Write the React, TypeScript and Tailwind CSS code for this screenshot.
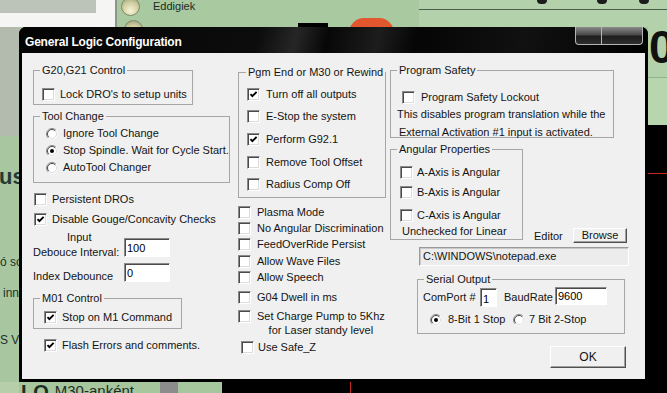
import clsx from "clsx";
import type { ReactNode } from "react";

// classic win32 sunken checkbox
const Check = ({ on }: { on?: boolean }) => (
  <span className="flex size-[13px] shrink-0 items-center justify-center border border-t-[#8a8a8a] border-l-[#8a8a8a] border-r-white border-b-white bg-white shadow-[inset_1px_1px_0_#4a4a4a,inset_-1px_-1px_0_#dcdcdc]">
    {on && (
      <svg width="9" height="9" viewBox="0 0 9 9">
        <path d="M1.5 4.2 3.4 6.2 7.6 1.9" fill="none" stroke="#000" strokeWidth="1.9" />
      </svg>
    )}
  </span>
);

const Radio = ({ on }: { on?: boolean }) => (
  <svg width="12" height="12" viewBox="0 0 12 12" className="shrink-0">
    <circle cx="6" cy="6" r="5.5" fill="#fff" />
    <path d="M9.9 2.1A5.5 5.5 0 0 0 2.1 9.9" fill="none" stroke="#8a8a8a" />
    <path d="M9.2 2.8A4.5 4.5 0 0 0 2.8 9.2" fill="none" stroke="#4a4a4a" />
    <path d="M9.2 2.8A4.5 4.5 0 0 1 2.8 9.2" fill="none" stroke="#dcdcdc" />
    {on && <circle cx="6" cy="6" r="2" fill="#000" />}
  </svg>
);

const CheckRow = ({
  on,
  label,
  className,
  gap = "ml-[5px]",
}: {
  on?: boolean;
  label: string;
  className?: string;
  gap?: string;
}) => (
  <div className={clsx("flex h-[13px] items-center", className)}>
    <Check on={on} />
    <span className={clsx("whitespace-nowrap", gap)}>{label}</span>
  </div>
);

const Group = ({
  legend,
  className,
  legendClass = "ml-[6px]",
  children,
}: {
  legend: string;
  className?: string;
  legendClass?: string;
  children: ReactNode;
}) => (
  <fieldset className={clsx("shrink-0 border border-[#a6a6a6]", className)}>
    <legend className={clsx("whitespace-nowrap px-[2px] leading-[13px]", legendClass)}>{legend}</legend>
    {children}
  </fieldset>
);

const Field = ({ value, className }: { value: string; className?: string }) => (
  <input
    readOnly
    value={value}
    className={clsx(
      "shrink-0 border border-t-[#8a8a8a] border-l-[#8a8a8a] border-r-white border-b-white bg-white px-[2px] text-[11px] leading-[13px] text-black shadow-[inset_1px_1px_0_#4a4a4a] outline-none",
      className
    )}
  />
);

const Btn = ({ className, children }: { className?: string; children: ReactNode }) => (
  <button className={clsx("flex shrink-0 items-center justify-center border border-t-white border-l-white border-r-[#505050] border-b-[#505050] bg-[#f0f0f0] leading-none shadow-[inset_-1px_-1px_0_#a0a0a0]", className)}>
    {children}
  </button>
);

const App = () => {
  return (
    <div className="relative h-[393px] w-[667px] overflow-hidden bg-[#a8c7a0] font-['Liberation_Sans',Arial,sans-serif] text-[11px] text-[#141414]">
      {/* Mach3 screen behind the dialog */}
      <div className="flex h-full flex-col">
        <div className="flex h-[27px] shrink-0">
          <div className="flex w-[96px] flex-col">
            <div className="h-[13px] bg-[#bcc3b8]" />
            <div className="flex-1 bg-[#f5f6f3]" />
          </div>
          <div className="w-[19px] bg-[#f5f6f3]" />
          <div className="w-[2px] bg-[#8e968b]" />
          <div className="flex w-[302px] items-start bg-[#a9c9a1] pl-[4px]">
            <div className="flex flex-col">
              <div className="-mt-[3px] size-[19px] rounded-full border border-[#7d8a68] bg-[radial-gradient(circle_at_50%_75%,#f7f4d6,#cfcc9f_55%,#8e9670)]" />
              <div className="ml-[3px] mt-[4px] size-[19px] rounded-full border border-[#7d8a68] bg-[radial-gradient(circle_at_50%_75%,#f7f4d6,#cfcc9f_55%,#8e9670)]" />
            </div>
            <span className="ml-[10px] text-[11px] leading-[13px] text-[#1d2b24]">Eddigiek</span>
            <div className="ml-auto mt-[23px] h-[4px] w-[30px] bg-black" />
            <div className="ml-[21px] mr-[25px] mt-[18px] h-[30px] w-[45px] rounded-full bg-[#e2572e]" />
          </div>
          <div className="flex flex-1 flex-col bg-[#b3d1aa]">
            <div className="flex h-[10px] border-b border-[#4c5e4e] pl-[118px]">
              <div className="h-[4px] w-[10px] rounded-b-sm bg-[#1c1c1c]" />
              <div className="ml-[50px] h-[4px] w-[10px] rounded-b-sm bg-[#1c1c1c]" />
              <div className="ml-[32px] h-[4px] w-[10px] rounded-b-sm bg-[#1c1c1c]" />
            </div>
          </div>
        </div>
        <div className="flex h-[355px] shrink-0">
          <div className="flex w-[19px] flex-col overflow-visible">
            <div className="h-[109px] shrink-0 bg-[#b3bbaf]" />
            <div className="flex flex-1 flex-col whitespace-nowrap text-[12px] leading-[14px] text-[#21322a]">
              <span className="-ml-[1px] mt-[30px] text-[22px] font-bold leading-[22px] text-[#263a33]">us</span>
              <span className="mt-[67px]">ó so</span>
              <span className="mt-[17px] pl-[3px]">inn</span>
              <span className="mt-[33px]">S Ve</span>
            </div>
          </div>
          <div className="flex-1" />
          <div className="flex w-[19px] flex-col">
            <div className="h-[50px] overflow-hidden bg-[#b3d1aa] pl-[1px]">
              <span className="block text-[46px] font-bold leading-[40px] text-[#111]">0</span>
            </div>
            <div className="h-[48px] border-t border-[#8fb088] bg-[#b7d6ae]" />
            <div className="flex flex-1 flex-col bg-black">
              <div className="mt-[48px] h-[1px] bg-[#c42a20]" />
            </div>
          </div>
        </div>
        <div className="flex h-[11px] shrink-0 text-[#1d2d25]">
          <div className="w-[19px] bg-[#b6cfaa]" />
          <div className="flex w-[141px] items-start bg-[#a6c69e] whitespace-nowrap">
            <span className="ml-[2px] mt-[1px] text-[20px] font-bold leading-[18px]">LO</span>
            <span className="ml-[6px] mt-[1px] text-[15px] leading-[15px]">M30-anként</span>
          </div>
          <div className="w-[18px] bg-[#8c8c8c]" />
          <div className="w-[44px] bg-[#a6c69e]" />
          <div className="flex flex-1 bg-black pl-[128px]">
            <div className="w-[1px] bg-[#c42a20]" />
          </div>
        </div>
      </div>

      {/* General Logic Configuration dialog */}
      <div className="absolute left-[19px] top-[27px] flex h-[355px] w-[629px] flex-col rounded-t-[7px] bg-black">
        <div className="flex h-[26px] shrink-0 justify-between rounded-t-[7px] bg-[linear-gradient(104deg,#040404_0%,#0c0c0c_38%,#262626_44%,#070707_49%,#1d1d1d_57%,#050505_63%,#111_80%,#000_100%)]">
          <span className="self-center pl-[6px] pt-[4px] text-[12px] font-bold leading-[14px] tracking-[-0.2px] text-white">
            General Logic Configuration
          </span>
          <div className="mr-[5px] flex h-[18px] overflow-hidden rounded-b-[4px] border border-t-0 border-[#b4b4b4] bg-[linear-gradient(#8a8a8a,#4a4a4a_45%,#1e1e1e_55%,#2e2e2e)]">
            <div className="w-[25px]" />
            <div className="w-[41px] border-l border-[#b4b4b4]" />
          </div>
        </div>

        <div className="mx-[3px] mb-[3px] flex flex-1 bg-[#f0f0f0] pl-[11px]">
          {/* left column */}
          <div className="flex w-[191px] shrink-0 flex-col">
            <Group legend="G20,G21 Control" className="mt-[11px] h-[41px] w-[160px]">
              <div className="pl-[8px] pt-[11px]">
                <CheckRow label="Lock DRO's to setup units" />
              </div>
            </Group>
            <Group legend="Tool Change" className="mt-[5px] h-[73px] w-[191px]">
              <div className="flex flex-col gap-[4px] pl-[12px] pt-[4px]">
                {["Ignore Tool Change", "Stop Spindle. Wait for Cycle Start.", "AutoTool Changer"].map((t, i) => (
                  <div key={t} className="flex h-[13px] items-center">
                    <Radio on={i === 1} />
                    <span className="ml-[5px] whitespace-nowrap">{t}</span>
                  </div>
                ))}
              </div>
            </Group>
            <CheckRow label="Persistent DROs" className="ml-[1px] mt-[10px]" />
            <CheckRow on label="Disable Gouge/Concavity Checks" className="ml-[1px] mt-[7px]" />
            <div className="mt-[4px] flex items-start">
              <div className="w-[91px] shrink-0 leading-[15px]">
                <div className="pl-[34px]">Input</div>
                <div className="whitespace-nowrap">Debouce Interval:</div>
              </div>
              <Field value="100" className="mt-[8px] h-[19px] w-[46px]" />
            </div>
            <div className="mt-[3px] flex items-start">
              <span className="mt-[7px] w-[91px] shrink-0 leading-[13px]">Index Debounce</span>
              <Field value="0" className="h-[19px] w-[46px]" />
            </div>
            <Group legend="M01 Control" className="mt-[9px] h-[37px] w-[149px]">
              <div className="pl-[10px] pt-[6px]">
                <CheckRow on label="Stop on M1 Command" />
              </div>
            </Group>
            <CheckRow on label="Flash Errors and comments." className="ml-[11px] mt-[10px]" />
          </div>

          {/* middle column */}
          <div className="ml-[14px] flex w-[143px] shrink-0 flex-col">
            <Group legend="Pgm End or M30 or Rewind" legendClass="ml-[7px]" className="mt-[13px] h-[132px] w-[143px]">
              <div className="flex flex-col pl-[8px] pt-[9px]">
                <CheckRow on label="Turn off all outputs" gap="ml-[6px]" />
                <CheckRow label="E-Stop the system" gap="ml-[6px]" className="mt-[9px]" />
                <CheckRow on label="Perform G92.1" gap="ml-[6px]" className="mt-[10px]" />
                <CheckRow label="Remove Tool Offset" gap="ml-[6px]" className="mt-[10px]" />
                <CheckRow label="Radius Comp Off" gap="ml-[6px]" className="mt-[9px]" />
              </div>
            </Group>
            <CheckRow label="Plasma Mode" gap="ml-[6px]" className="mt-[8px]" />
            <CheckRow label="No Angular Discrimination" gap="ml-[6px]" className="mt-[3px]" />
            <CheckRow label="FeedOverRide Persist" gap="ml-[6px]" className="mt-[3px]" />
            <CheckRow label="Allow Wave Files" gap="ml-[6px]" className="mt-[4px]" />
            <CheckRow label="Allow Speech" gap="ml-[6px]" className="mt-[3px]" />
            <CheckRow label="G04 Dwell in ms" gap="ml-[6px]" className="mt-[7px]" />
            <div className="mt-[5px] flex items-start">
              <div className="mt-[1px]">
                <Check />
              </div>
              <div className="ml-[6px] whitespace-nowrap text-center leading-[14px]">
                <div>Set Charge Pump to 5Khz</div>
                <div>for Laser standy level</div>
              </div>
            </div>
            <CheckRow label="Use Safe_Z" gap="ml-[4px]" className="ml-[3px] mt-[4px]" />
          </div>

          {/* right column */}
          <div className="ml-[9px] flex w-[239px] shrink-0 flex-col">
            <Group legend="Program Safety" className="mt-[11px] h-[74px] w-[224px]">
              <div className="pl-[11px] pt-[14px]">
                <CheckRow label="Program Safety Lockout" gap="ml-[6px]" />
              </div>
              <p className="mt-[4px] whitespace-nowrap pl-[6px] leading-[13px]">This disables program translation while the</p>
              <p className="mt-[5px] whitespace-nowrap pl-[8px] leading-[13px]">External Activation #1 input is activated.</p>
            </Group>
            <div className="mt-[5px] flex items-start">
              <Group legend="Angular Properties" className="h-[97px] w-[133px]">
                <div className="flex flex-col pl-[9px] pt-[10px]">
                  <CheckRow label="A-Axis is Angular" gap="ml-[4px]" />
                  <CheckRow label="B-Axis is Angular" gap="ml-[4px]" className="mt-[7px]" />
                  <CheckRow label="C-Axis is Angular" gap="ml-[4px]" className="mt-[10px]" />
                  <p className="mt-[3px] whitespace-nowrap pl-[2px] leading-[13px]">Unchecked for Linear</p>
                </div>
              </Group>
              <div className="ml-[11px] mt-[85px] flex h-[15px] items-center">
                <span className="w-[39px] pt-[1px]">Editor</span>
                <Btn className="h-[15px] w-[54px]">Browse</Btn>
              </div>
            </div>
            <div className="ml-[29px] mt-[4px] flex h-[19px] w-[210px] items-center border border-t-[#9a9a9a] border-l-[#9a9a9a] border-r-white border-b-white bg-[#ececec] pl-[3px] shadow-[inset_1px_1px_0_#c8c8c8]">
              C:\WINDOWS\notepad.exe
            </div>
            <Group legend="Serial Output" className="ml-[27px] mt-[7px] h-[61px] w-[208px]">
              <div className="flex items-start pl-[5px] pt-[1px]">
                <span className="mt-[4px] w-[57px] shrink-0 leading-[13px]">ComPort #</span>
                <Field value="1" className="mt-[1px] h-[19px] w-[17px] pt-[3px]" />
                <span className="ml-[7px] mt-[4px] w-[51px] shrink-0 leading-[13px]">BaudRate</span>
                <Field value="9600" className="h-[18px] w-[52px]" />
              </div>
              <div className="mt-[6px] flex h-[13px] items-center pl-[12px]">
                <Radio on />
                <span className="ml-[6px] w-[65px] shrink-0 whitespace-nowrap">8-Bit 1 Stop</span>
                <Radio />
                <span className="ml-[4px] whitespace-nowrap">7 Bit 2-Stop</span>
              </div>
            </Group>
            <Btn className="ml-[160px] mt-[12px] h-[22px] w-[76px] text-[12px]">OK</Btn>
          </div>
        </div>
      </div>
    </div>
  );
};

export default App;
